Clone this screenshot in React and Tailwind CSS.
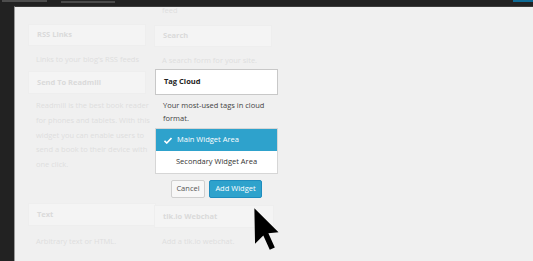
import React from "react";

const font = { fontFamily: '"Open Sans", "Noto Sans", sans-serif' };

const FadedHeader = ({ title, className = "" }) => (
  <div className={`h-[22px] w-[118px] flex items-center px-[8px] bg-[#f4f4f4] border border-[#eeeeee] ${className}`}>
    <span className="text-[7.5px] font-bold text-[#dadada]">{title}</span>
  </div>
);

const FadedText = ({ children, className = "" }) => (
  <p className={`text-[7.5px] leading-[12px] text-[#dedede] pl-[8px] ${className}`}>{children}</p>
);

const Cursor = () => (
  <svg
    className="absolute left-[253px] top-[207px]"
    width="28"
    height="46"
    viewBox="0 0 12 20"
    style={{ filter: "blur(0.4px)" }}
  >
    <path d="M0.5 0.5 L0.8 16 L4.4 12.4 L7.2 18.6 L9.4 17.6 L6.6 11.4 L11 11 Z" fill="#000" />
  </svg>
);

export default function App() {
  return (
    <div className="relative w-[533px] h-[261px] overflow-hidden bg-[#222]" style={font}>
      {/* admin bar remnant */}
      <div className="h-[6px] relative">
        <div className="absolute left-[2px] top-0 w-[45px] h-[2px] bg-[#6a6a6a] opacity-60" />
        <div className="absolute left-[61px] top-[1px] w-[54px] h-[2px] bg-[#4a4a4a]" />
        <div className="absolute right-0 top-0 w-[20px] h-[2px] bg-[#0e6a94]" />
      </div>

      <div className="flex h-[255px] w-[533px]">
        <div className="w-[14px] shrink-0" />
        <main className="w-[519px] h-[255px] bg-[#f0f0f0] border-t border-t-[#3c3c3c] border-l border-l-[#9a9a9a] flex gap-[8px] pl-[13px]">
          {/* left column */}
          <div className="w-[118px] flex flex-col">
            <FadedHeader title="RSS Links" className="mt-[17px]" />
            <FadedText className="mt-[7px] whitespace-nowrap">Links to your blog's RSS feeds</FadedText>
            <FadedHeader title="Send To Readmill" className="mt-[6px] h-[23px]" />
            <p className="text-[7.5px] leading-[14.75px] text-[#dedede] pl-[8px] mt-[4px] whitespace-nowrap">
              Readmill is the best book reader
              <br />
              for phones and tablets. With this
              <br />
              widget you can enable users to
              <br />
              send a book to their device with
              <br />
              one click.
            </p>
            <FadedHeader title="Text" className="mt-[31px] h-[23px] w-[128px]" />
            <FadedText className="mt-[9px] whitespace-nowrap">Arbitrary text or HTML.</FadedText>
          </div>

          {/* right column */}
          <div className="w-[125px] flex flex-col">
            <FadedText className="-mt-[3px]">feed</FadedText>
            <FadedHeader title="Search" className="mt-[9px]" />
            <FadedText className="mt-[7px] whitespace-nowrap">A search form for your site.</FadedText>

            {/* expanded widget */}
            <div className="mt-[3px] ml-[1px] w-[123px] h-[26px] bg-white border border-[#c8c8c8] flex items-center px-[8px]">
              <span className="text-[7.5px] font-bold text-[#222]">Tag Cloud</span>
            </div>
            <p className="mt-[4px] pl-[9px] text-[7.5px] leading-[13px] text-[#444]">
              Your most-used tags in cloud
              <br />
              format.
            </p>
            <div className="mt-[3px] ml-[1px] w-[123px] border border-[#d6d6d6] bg-white">
              <div className="h-[22px] bg-[#2ea2cc] flex items-center pl-[8px] gap-[5px] text-white text-[7.5px]">
                <svg width="8" height="7" viewBox="0 0 16 13">
                  <path d="M1 7 L5.5 11.5 L15 1.5" stroke="#fff" strokeWidth="3.2" fill="none" />
                </svg>
                <span>Main Widget Area</span>
              </div>
              <div className="h-[22px] flex items-center pl-[20px] text-[7.5px] text-[#333]">
                Secondary Widget Area
              </div>
            </div>
            <div className="mt-[6px] flex gap-[4px] pl-[17px]">
              <button className="h-[18px] w-[34px] bg-[#f7f7f7] border border-[#cfcfcf] rounded-[2px] text-[7.5px] text-[#555]">
                Cancel
              </button>
              <button className="h-[18px] w-[53px] bg-[#2ea2cc] border border-[#1e8cbe] rounded-[2px] text-[7.5px] text-white">
                Add Widget
              </button>
            </div>
            <FadedHeader title="tlk.io Webchat" className="mt-[7px] h-[23px] w-[120px]" />
            <FadedText className="mt-[7px] whitespace-nowrap">Add a tlk.io webchat.</FadedText>
          </div>
        </main>
      </div>
      <Cursor />
    </div>
  );
}
